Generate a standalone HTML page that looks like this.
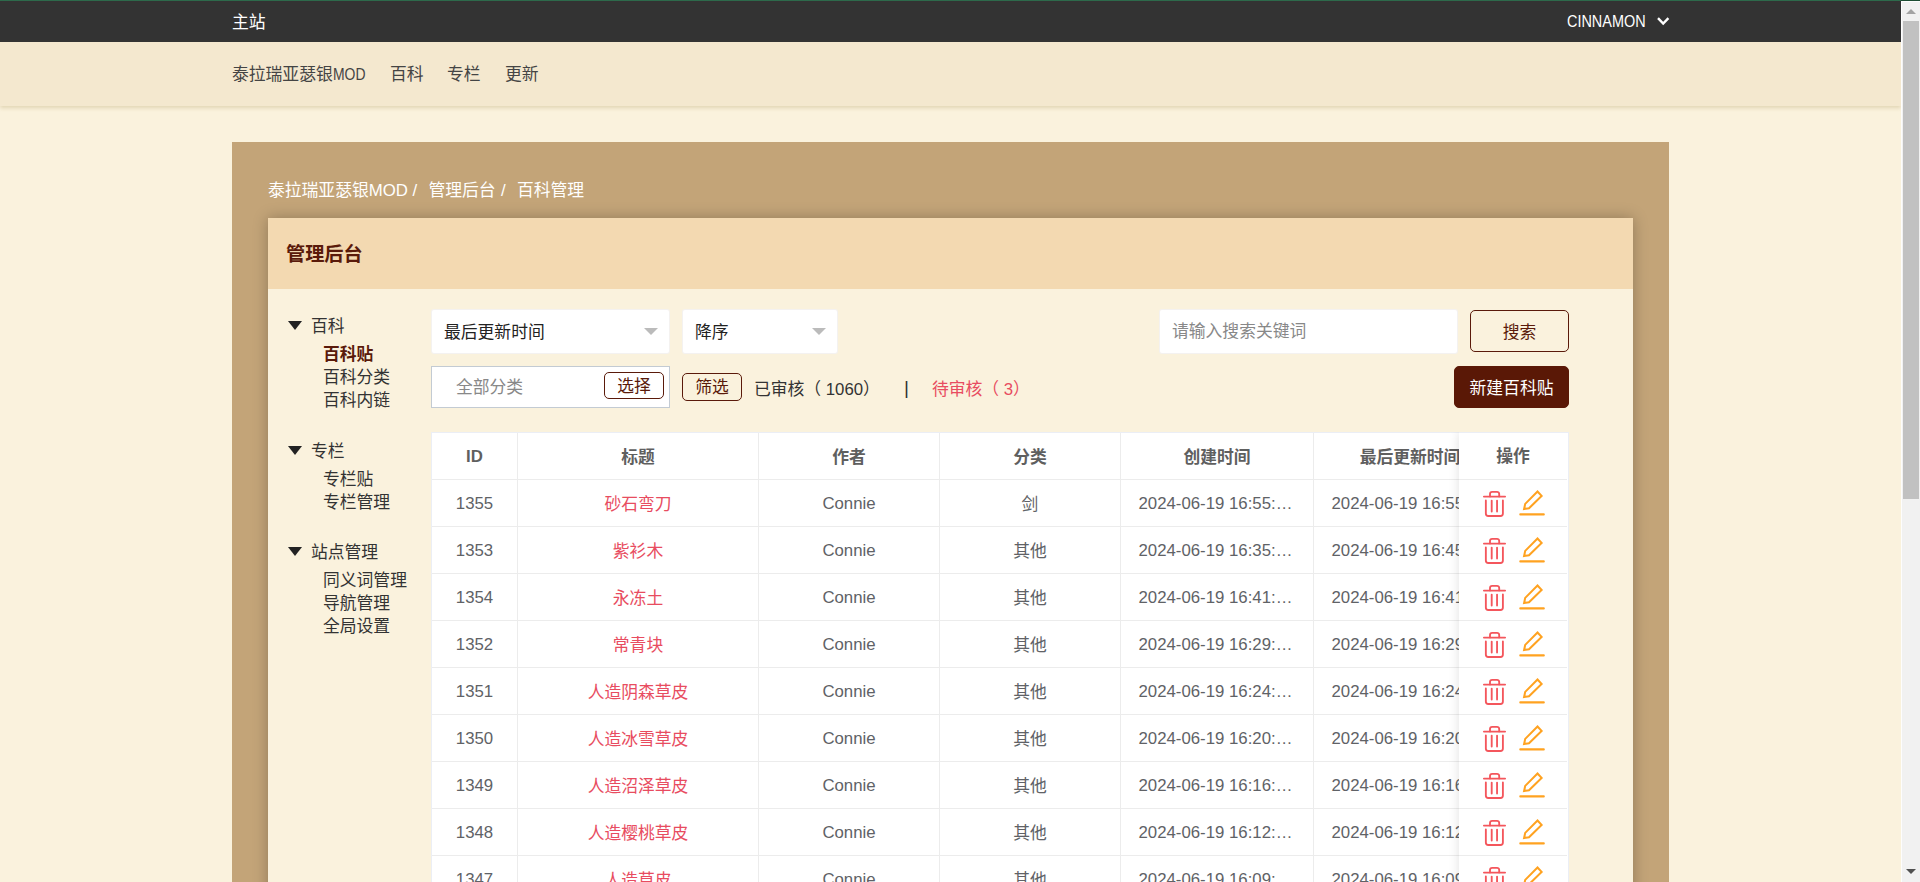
<!DOCTYPE html>
<html lang="zh-CN">
<head>
<meta charset="utf-8">
<title>百科管理 - 泰拉瑞亚瑟银MOD</title>
<style>
*{box-sizing:border-box;margin:0;padding:0}
html,body{width:1920px;height:882px;overflow:hidden}
body{position:relative;background:#faf2dd;font-family:"Liberation Sans","Noto Sans CJK SC",sans-serif;color:#333;font-size:16.8px}
a{color:inherit;text-decoration:none}
.abs{position:absolute}
/* top bars */
#greenline{left:0;top:0;width:1920px;height:1px;background:linear-gradient(90deg,#2d6a4b 0,#2d6a4b 1901px,#1d4d33 1901px);z-index:50}
#topbar{left:0;top:1px;width:1901px;height:41px;background:#333;color:#fff;z-index:20}
#topbar .home{position:absolute;left:232px;top:9px;font-size:16.8px;line-height:26px}
#topbar .user{position:absolute;left:1567px;top:8px;font-size:16.8px;line-height:26px;transform:scaleX(.86);transform-origin:0 50%}
#topbar svg{position:absolute;left:1656px;top:15px}
#navbar{left:0;top:42px;width:1901px;height:64px;background:#f4e8cf;box-shadow:0 2px 4px rgba(140,110,30,.22);z-index:10;color:#444}
#navbar a{position:absolute;top:20px;font-size:16.8px;line-height:26px;white-space:nowrap}
/* brown wrapper */
#wrap{left:232px;top:142px;width:1437px;height:760px;background:#c3a478}
#crumb{left:0;top:178px;color:#fff;font-size:16.8px;line-height:26px;white-space:nowrap}
#panel{left:268px;top:218px;width:1365px;height:700px;background:#faf2dd;box-shadow:0 0 14px rgba(0,0,0,.26)}
#panelhead{left:0;top:0;width:1365px;height:71px;background:#f3d9b1}
#panelhead h2{position:absolute;left:18px;top:21.6px;font-size:19.2px;line-height:30px;color:#5a1a0a;font-weight:bold}
/* sidebar */
.side{position:absolute;left:0;top:1px;font-size:16.8px;line-height:23px;color:#333;white-space:nowrap}
.side .tri{position:absolute;left:19.5px;margin-top:-1px;width:0;height:0;border-left:7px solid transparent;border-right:7px solid transparent;border-top:9px solid #222}
.side .sum{position:absolute;left:43px}
.side .it{position:absolute;left:55px}
.side .act{font-weight:bold;color:#5a1a0a}

/* filters */
.sel{position:absolute;top:92px;height:43px;background:#fff;border-radius:2px;box-shadow:0 0 0 1px #f4f2f0;font-size:16.8px;line-height:45px;padding-left:12px;color:#222;white-space:nowrap}
.sel i{position:absolute;top:18px;width:0;height:0;border-left:7px solid transparent;border-right:7px solid transparent;border-top:7px solid #bbb}
.inp{position:absolute;background:#fff;font-size:16.8px;color:#888;white-space:nowrap}
.btn{position:absolute;border:1px solid #5a1a0a;border-radius:5px;text-align:center;font-size:16.8px;color:#5a1a0a;white-space:nowrap}
.txt{position:absolute;font-size:16.8px;line-height:26px;white-space:nowrap;top:159px}
.pink{color:#e84c60}

/* table */
#tbl{position:absolute;left:163px;top:214px;width:1138px;height:520px;overflow:hidden;border-left:1px solid #ebeef5;border-top:1px solid #ebeef5;background:#fff;font-size:16.8px;color:#606266}
#tbl table{border-collapse:separate;border-spacing:0;table-layout:fixed;width:1270px}
#tbl th,#tbl td{height:47px;border-right:1px solid #ececec;border-bottom:1px solid #ececec;text-align:center;vertical-align:middle;padding:0;white-space:nowrap;overflow:hidden;background:#fff}
#tbl th{font-weight:bold;color:#5f5f5f}
#tbl td a{color:#e84c60}
#tbl .c{display:block;line-height:23px;padding:0 18.5px;overflow:hidden;text-overflow:ellipsis;white-space:nowrap;position:relative;top:1px}
#tbl .c.l{top:0}
#tbl .c.d{padding:0 19.5px 0 17.5px}
#fix{position:absolute;left:1191px;top:214px;width:110px;height:520px;background:#fff;border-top:1px solid #ebeef5;border-right:1px solid #ebeef5;box-shadow:0 0 10px rgba(0,0,0,.12);font-size:16.8px;clip-path:inset(0 0 0 -12px)}
#fix .r{position:relative;height:47px;margin-right:1px;border-bottom:1px solid #ececec}
#fix .h{font-weight:bold;color:#5f5f5f;text-align:center;line-height:47px}
#fix svg{position:absolute;top:9px}

/* fake scrollbar */
#sb{left:1901px;top:1px;width:19px;height:881px;background:#f1f1f1;border-left:1px solid #fdfdfd;border-top:1px solid #fdfdfd;z-index:40}
#sb .th{position:absolute;left:1px;top:19px;width:16px;height:478px;background:#c1c1c1}
#sb .up{position:absolute;left:4px;top:7px;width:0;height:0;border-left:5.5px solid transparent;border-right:5.5px solid transparent;border-bottom:5.5px solid #a3a3a3}
#sb .dn{position:absolute;left:4px;top:867px;width:0;height:0;border-left:5.5px solid transparent;border-right:5.5px solid transparent;border-top:5.5px solid #505050}
#navbar .lat{display:inline-block;transform:scaleX(.83);transform-origin:0 50%}
#crumb span{position:absolute;top:0}
</style>
</head>
<body>
<div id="greenline" class="abs"></div>
<div id="topbar" class="abs">
  <a class="home">主站</a>
  <span class="user">CINNAMON</span>
  <svg width="16" height="12" viewBox="0 0 16 12"><path d="M2 2.2 L7.2 7.6 L12.4 2.2" fill="none" stroke="#fff" stroke-width="2.4" stroke-linecap="butt" stroke-linejoin="miter"/></svg>
</div>
<div id="navbar" class="abs">
  <a style="left:232px">泰拉瑞亚瑟银<span class="lat">MOD</span></a>
  <a style="left:390px">百科</a>
  <a style="left:447px">专栏</a>
  <a style="left:505px">更新</a>
</div>
<div id="wrap" class="abs"></div>
<div id="crumb" class="abs"><span style="left:268px">泰拉瑞亚瑟银MOD</span><span style="left:412.5px">/</span><span style="left:428.5px">管理后台</span><span style="left:501px">/</span><span style="left:517px">百科管理</span></div>
<div id="panel" class="abs">
  <div id="panelhead" class="abs"><h2>管理后台</h2></div>
  <div class="side" id="side">
  <i class="tri" style="top:102.5px"></i><span class="sum" style="top:95.5px">百科</span>
  <a class="it act" style="top:123.5px">百科贴</a>
  <a class="it" style="top:146.5px">百科分类</a>
  <a class="it" style="top:169.5px">百科内链</a>
  <i class="tri" style="top:227.5px"></i><span class="sum" style="top:220.5px">专栏</span>
  <a class="it" style="top:248.5px">专栏贴</a>
  <a class="it" style="top:271.5px">专栏管理</a>
  <i class="tri" style="top:328.5px"></i><span class="sum" style="top:321.5px">站点管理</span>
  <a class="it" style="top:349.5px">同义词管理</a>
  <a class="it" style="top:372.5px">导航管理</a>
  <a class="it" style="top:395.5px">全局设置</a>
</div>
  <div class="sel" style="left:164px;width:237px">最后更新时间<i style="left:212px"></i></div>
  <div class="sel" style="left:415px;width:154px">降序<i style="left:129px"></i></div>
  <div class="inp" style="left:163px;top:148px;width:239px;height:42px;border:1px solid #c3cbd3;line-height:41.5px;padding-left:24px">全部分类</div>
  <a class="btn" style="left:336px;top:154px;width:60px;height:27px;line-height:27px;background:#fff">选择</a>
  <a class="btn" style="left:414px;top:155px;width:60px;height:28px;line-height:28px">筛选</a>
  <span class="txt" style="left:486px">已审核（ 1060）</span>
  <span class="txt" style="left:636px;top:157px;font-size:19px">|</span>
  <span class="txt pink" style="left:664px">待审核（ 3）</span>
  <div class="inp" style="left:892px;top:92px;width:297px;height:43px;border-radius:2px;box-shadow:0 0 0 1px #f4f2f0;line-height:44px;padding-left:12px">请输入搜索关键词</div>
  <a class="btn" style="left:1202px;top:92px;width:99px;height:42px;line-height:43px">搜索</a>
  <a class="btn" style="left:1186px;top:148px;width:115px;height:42px;line-height:43px;background:#5a1806;border-color:#5a1806;color:#fff">新建百科贴</a>
  <div id="tbl"><table>
<colgroup><col style="width:86px"><col style="width:241px"><col style="width:181px"><col style="width:181px"><col style="width:193px"><col style="width:193px"><col style="width:195px"></colgroup>
<thead><tr><th><span class="c l">ID</span></th><th><span class="c">标题</span></th><th><span class="c">作者</span></th><th><span class="c">分类</span></th><th><span class="c">创建时间</span></th><th><span class="c">最后更新时间</span></th><th><span class="c">操作</span></th></tr></thead>
<tbody>
<tr><td><span class="c l">1355</span></td><td><span class="c"><a>砂石弯刀</a></span></td><td><span class="c l">Connie</span></td><td><span class="c">剑</span></td><td><span class="c l d">2024-06-19 16:55:32</span></td><td><span class="c l d">2024-06-19 16:55:32</span></td><td></td></tr>
<tr><td><span class="c l">1353</span></td><td><span class="c"><a>紫衫木</a></span></td><td><span class="c l">Connie</span></td><td><span class="c">其他</span></td><td><span class="c l d">2024-06-19 16:35:27</span></td><td><span class="c l d">2024-06-19 16:45:51</span></td><td></td></tr>
<tr><td><span class="c l">1354</span></td><td><span class="c"><a>永冻土</a></span></td><td><span class="c l">Connie</span></td><td><span class="c">其他</span></td><td><span class="c l d">2024-06-19 16:41:08</span></td><td><span class="c l d">2024-06-19 16:41:08</span></td><td></td></tr>
<tr><td><span class="c l">1352</span></td><td><span class="c"><a>常青块</a></span></td><td><span class="c l">Connie</span></td><td><span class="c">其他</span></td><td><span class="c l d">2024-06-19 16:29:46</span></td><td><span class="c l d">2024-06-19 16:29:46</span></td><td></td></tr>
<tr><td><span class="c l">1351</span></td><td><span class="c"><a>人造阴森草皮</a></span></td><td><span class="c l">Connie</span></td><td><span class="c">其他</span></td><td><span class="c l d">2024-06-19 16:24:13</span></td><td><span class="c l d">2024-06-19 16:24:13</span></td><td></td></tr>
<tr><td><span class="c l">1350</span></td><td><span class="c"><a>人造冰雪草皮</a></span></td><td><span class="c l">Connie</span></td><td><span class="c">其他</span></td><td><span class="c l d">2024-06-19 16:20:39</span></td><td><span class="c l d">2024-06-19 16:20:39</span></td><td></td></tr>
<tr><td><span class="c l">1349</span></td><td><span class="c"><a>人造沼泽草皮</a></span></td><td><span class="c l">Connie</span></td><td><span class="c">其他</span></td><td><span class="c l d">2024-06-19 16:16:05</span></td><td><span class="c l d">2024-06-19 16:16:05</span></td><td></td></tr>
<tr><td><span class="c l">1348</span></td><td><span class="c"><a>人造樱桃草皮</a></span></td><td><span class="c l">Connie</span></td><td><span class="c">其他</span></td><td><span class="c l d">2024-06-19 16:12:21</span></td><td><span class="c l d">2024-06-19 16:12:21</span></td><td></td></tr>
<tr><td><span class="c l">1347</span></td><td><span class="c"><a>人造草皮</a></span></td><td><span class="c l">Connie</span></td><td><span class="c">其他</span></td><td><span class="c l d">2024-06-19 16:09:44</span></td><td><span class="c l d">2024-06-19 16:09:44</span></td><td></td></tr>
<tr><td><span class="c l">1346</span></td><td><span class="c"><a>人造丛林草皮</a></span></td><td><span class="c l">Connie</span></td><td><span class="c">其他</span></td><td><span class="c l d">2024-06-19 16:05:10</span></td><td><span class="c l d">2024-06-19 16:05:10</span></td><td></td></tr>
</tbody></table></div>
<div id="fix"><div class="r h">操作</div>
<div class="r"><svg style="left:23px" width="28" height="30" viewBox="0 0 28 30" fill="none" stroke="#f4565c" stroke-width="1.85" stroke-linecap="round" stroke-linejoin="round"><path d="M1.9 7.6H23.1"/><path d="M8 7.4V5a2.2 2.2 0 0 1 2.2-2.2h4.8a2.2 2.2 0 0 1 2.2 2.2v2.4"/><path d="M3.85 11.4V24.5a2.5 2.5 0 0 0 2.5 2.5h12.05a2.5 2.5 0 0 0 2.5-2.5V11.4"/><path d="M9.7 11.6V22.6M15.05 11.6V22.6"/></svg><svg style="left:59px" width="28" height="30" viewBox="0 0 28 30" fill="none" stroke="#ffa220" stroke-width="2.05"><path d="M19.5 2.5L23.6 6.9L11 19.3L6.1 20L7.2 14.9Z" stroke-linejoin="miter"/><path d="M2.3 25.4H25.8" stroke-width="2.1" stroke-linecap="round"/></svg></div>
<div class="r"><svg style="left:23px" width="28" height="30" viewBox="0 0 28 30" fill="none" stroke="#f4565c" stroke-width="1.85" stroke-linecap="round" stroke-linejoin="round"><path d="M1.9 7.6H23.1"/><path d="M8 7.4V5a2.2 2.2 0 0 1 2.2-2.2h4.8a2.2 2.2 0 0 1 2.2 2.2v2.4"/><path d="M3.85 11.4V24.5a2.5 2.5 0 0 0 2.5 2.5h12.05a2.5 2.5 0 0 0 2.5-2.5V11.4"/><path d="M9.7 11.6V22.6M15.05 11.6V22.6"/></svg><svg style="left:59px" width="28" height="30" viewBox="0 0 28 30" fill="none" stroke="#ffa220" stroke-width="2.05"><path d="M19.5 2.5L23.6 6.9L11 19.3L6.1 20L7.2 14.9Z" stroke-linejoin="miter"/><path d="M2.3 25.4H25.8" stroke-width="2.1" stroke-linecap="round"/></svg></div>
<div class="r"><svg style="left:23px" width="28" height="30" viewBox="0 0 28 30" fill="none" stroke="#f4565c" stroke-width="1.85" stroke-linecap="round" stroke-linejoin="round"><path d="M1.9 7.6H23.1"/><path d="M8 7.4V5a2.2 2.2 0 0 1 2.2-2.2h4.8a2.2 2.2 0 0 1 2.2 2.2v2.4"/><path d="M3.85 11.4V24.5a2.5 2.5 0 0 0 2.5 2.5h12.05a2.5 2.5 0 0 0 2.5-2.5V11.4"/><path d="M9.7 11.6V22.6M15.05 11.6V22.6"/></svg><svg style="left:59px" width="28" height="30" viewBox="0 0 28 30" fill="none" stroke="#ffa220" stroke-width="2.05"><path d="M19.5 2.5L23.6 6.9L11 19.3L6.1 20L7.2 14.9Z" stroke-linejoin="miter"/><path d="M2.3 25.4H25.8" stroke-width="2.1" stroke-linecap="round"/></svg></div>
<div class="r"><svg style="left:23px" width="28" height="30" viewBox="0 0 28 30" fill="none" stroke="#f4565c" stroke-width="1.85" stroke-linecap="round" stroke-linejoin="round"><path d="M1.9 7.6H23.1"/><path d="M8 7.4V5a2.2 2.2 0 0 1 2.2-2.2h4.8a2.2 2.2 0 0 1 2.2 2.2v2.4"/><path d="M3.85 11.4V24.5a2.5 2.5 0 0 0 2.5 2.5h12.05a2.5 2.5 0 0 0 2.5-2.5V11.4"/><path d="M9.7 11.6V22.6M15.05 11.6V22.6"/></svg><svg style="left:59px" width="28" height="30" viewBox="0 0 28 30" fill="none" stroke="#ffa220" stroke-width="2.05"><path d="M19.5 2.5L23.6 6.9L11 19.3L6.1 20L7.2 14.9Z" stroke-linejoin="miter"/><path d="M2.3 25.4H25.8" stroke-width="2.1" stroke-linecap="round"/></svg></div>
<div class="r"><svg style="left:23px" width="28" height="30" viewBox="0 0 28 30" fill="none" stroke="#f4565c" stroke-width="1.85" stroke-linecap="round" stroke-linejoin="round"><path d="M1.9 7.6H23.1"/><path d="M8 7.4V5a2.2 2.2 0 0 1 2.2-2.2h4.8a2.2 2.2 0 0 1 2.2 2.2v2.4"/><path d="M3.85 11.4V24.5a2.5 2.5 0 0 0 2.5 2.5h12.05a2.5 2.5 0 0 0 2.5-2.5V11.4"/><path d="M9.7 11.6V22.6M15.05 11.6V22.6"/></svg><svg style="left:59px" width="28" height="30" viewBox="0 0 28 30" fill="none" stroke="#ffa220" stroke-width="2.05"><path d="M19.5 2.5L23.6 6.9L11 19.3L6.1 20L7.2 14.9Z" stroke-linejoin="miter"/><path d="M2.3 25.4H25.8" stroke-width="2.1" stroke-linecap="round"/></svg></div>
<div class="r"><svg style="left:23px" width="28" height="30" viewBox="0 0 28 30" fill="none" stroke="#f4565c" stroke-width="1.85" stroke-linecap="round" stroke-linejoin="round"><path d="M1.9 7.6H23.1"/><path d="M8 7.4V5a2.2 2.2 0 0 1 2.2-2.2h4.8a2.2 2.2 0 0 1 2.2 2.2v2.4"/><path d="M3.85 11.4V24.5a2.5 2.5 0 0 0 2.5 2.5h12.05a2.5 2.5 0 0 0 2.5-2.5V11.4"/><path d="M9.7 11.6V22.6M15.05 11.6V22.6"/></svg><svg style="left:59px" width="28" height="30" viewBox="0 0 28 30" fill="none" stroke="#ffa220" stroke-width="2.05"><path d="M19.5 2.5L23.6 6.9L11 19.3L6.1 20L7.2 14.9Z" stroke-linejoin="miter"/><path d="M2.3 25.4H25.8" stroke-width="2.1" stroke-linecap="round"/></svg></div>
<div class="r"><svg style="left:23px" width="28" height="30" viewBox="0 0 28 30" fill="none" stroke="#f4565c" stroke-width="1.85" stroke-linecap="round" stroke-linejoin="round"><path d="M1.9 7.6H23.1"/><path d="M8 7.4V5a2.2 2.2 0 0 1 2.2-2.2h4.8a2.2 2.2 0 0 1 2.2 2.2v2.4"/><path d="M3.85 11.4V24.5a2.5 2.5 0 0 0 2.5 2.5h12.05a2.5 2.5 0 0 0 2.5-2.5V11.4"/><path d="M9.7 11.6V22.6M15.05 11.6V22.6"/></svg><svg style="left:59px" width="28" height="30" viewBox="0 0 28 30" fill="none" stroke="#ffa220" stroke-width="2.05"><path d="M19.5 2.5L23.6 6.9L11 19.3L6.1 20L7.2 14.9Z" stroke-linejoin="miter"/><path d="M2.3 25.4H25.8" stroke-width="2.1" stroke-linecap="round"/></svg></div>
<div class="r"><svg style="left:23px" width="28" height="30" viewBox="0 0 28 30" fill="none" stroke="#f4565c" stroke-width="1.85" stroke-linecap="round" stroke-linejoin="round"><path d="M1.9 7.6H23.1"/><path d="M8 7.4V5a2.2 2.2 0 0 1 2.2-2.2h4.8a2.2 2.2 0 0 1 2.2 2.2v2.4"/><path d="M3.85 11.4V24.5a2.5 2.5 0 0 0 2.5 2.5h12.05a2.5 2.5 0 0 0 2.5-2.5V11.4"/><path d="M9.7 11.6V22.6M15.05 11.6V22.6"/></svg><svg style="left:59px" width="28" height="30" viewBox="0 0 28 30" fill="none" stroke="#ffa220" stroke-width="2.05"><path d="M19.5 2.5L23.6 6.9L11 19.3L6.1 20L7.2 14.9Z" stroke-linejoin="miter"/><path d="M2.3 25.4H25.8" stroke-width="2.1" stroke-linecap="round"/></svg></div>
<div class="r"><svg style="left:23px" width="28" height="30" viewBox="0 0 28 30" fill="none" stroke="#f4565c" stroke-width="1.85" stroke-linecap="round" stroke-linejoin="round"><path d="M1.9 7.6H23.1"/><path d="M8 7.4V5a2.2 2.2 0 0 1 2.2-2.2h4.8a2.2 2.2 0 0 1 2.2 2.2v2.4"/><path d="M3.85 11.4V24.5a2.5 2.5 0 0 0 2.5 2.5h12.05a2.5 2.5 0 0 0 2.5-2.5V11.4"/><path d="M9.7 11.6V22.6M15.05 11.6V22.6"/></svg><svg style="left:59px" width="28" height="30" viewBox="0 0 28 30" fill="none" stroke="#ffa220" stroke-width="2.05"><path d="M19.5 2.5L23.6 6.9L11 19.3L6.1 20L7.2 14.9Z" stroke-linejoin="miter"/><path d="M2.3 25.4H25.8" stroke-width="2.1" stroke-linecap="round"/></svg></div>
<div class="r"><svg style="left:23px" width="28" height="30" viewBox="0 0 28 30" fill="none" stroke="#f4565c" stroke-width="1.85" stroke-linecap="round" stroke-linejoin="round"><path d="M1.9 7.6H23.1"/><path d="M8 7.4V5a2.2 2.2 0 0 1 2.2-2.2h4.8a2.2 2.2 0 0 1 2.2 2.2v2.4"/><path d="M3.85 11.4V24.5a2.5 2.5 0 0 0 2.5 2.5h12.05a2.5 2.5 0 0 0 2.5-2.5V11.4"/><path d="M9.7 11.6V22.6M15.05 11.6V22.6"/></svg><svg style="left:59px" width="28" height="30" viewBox="0 0 28 30" fill="none" stroke="#ffa220" stroke-width="2.05"><path d="M19.5 2.5L23.6 6.9L11 19.3L6.1 20L7.2 14.9Z" stroke-linejoin="miter"/><path d="M2.3 25.4H25.8" stroke-width="2.1" stroke-linecap="round"/></svg></div>
</div>
</div>
<div id="sb" class="abs"><i class="up"></i><i class="th"></i><i class="dn"></i></div>
</body>
</html>
